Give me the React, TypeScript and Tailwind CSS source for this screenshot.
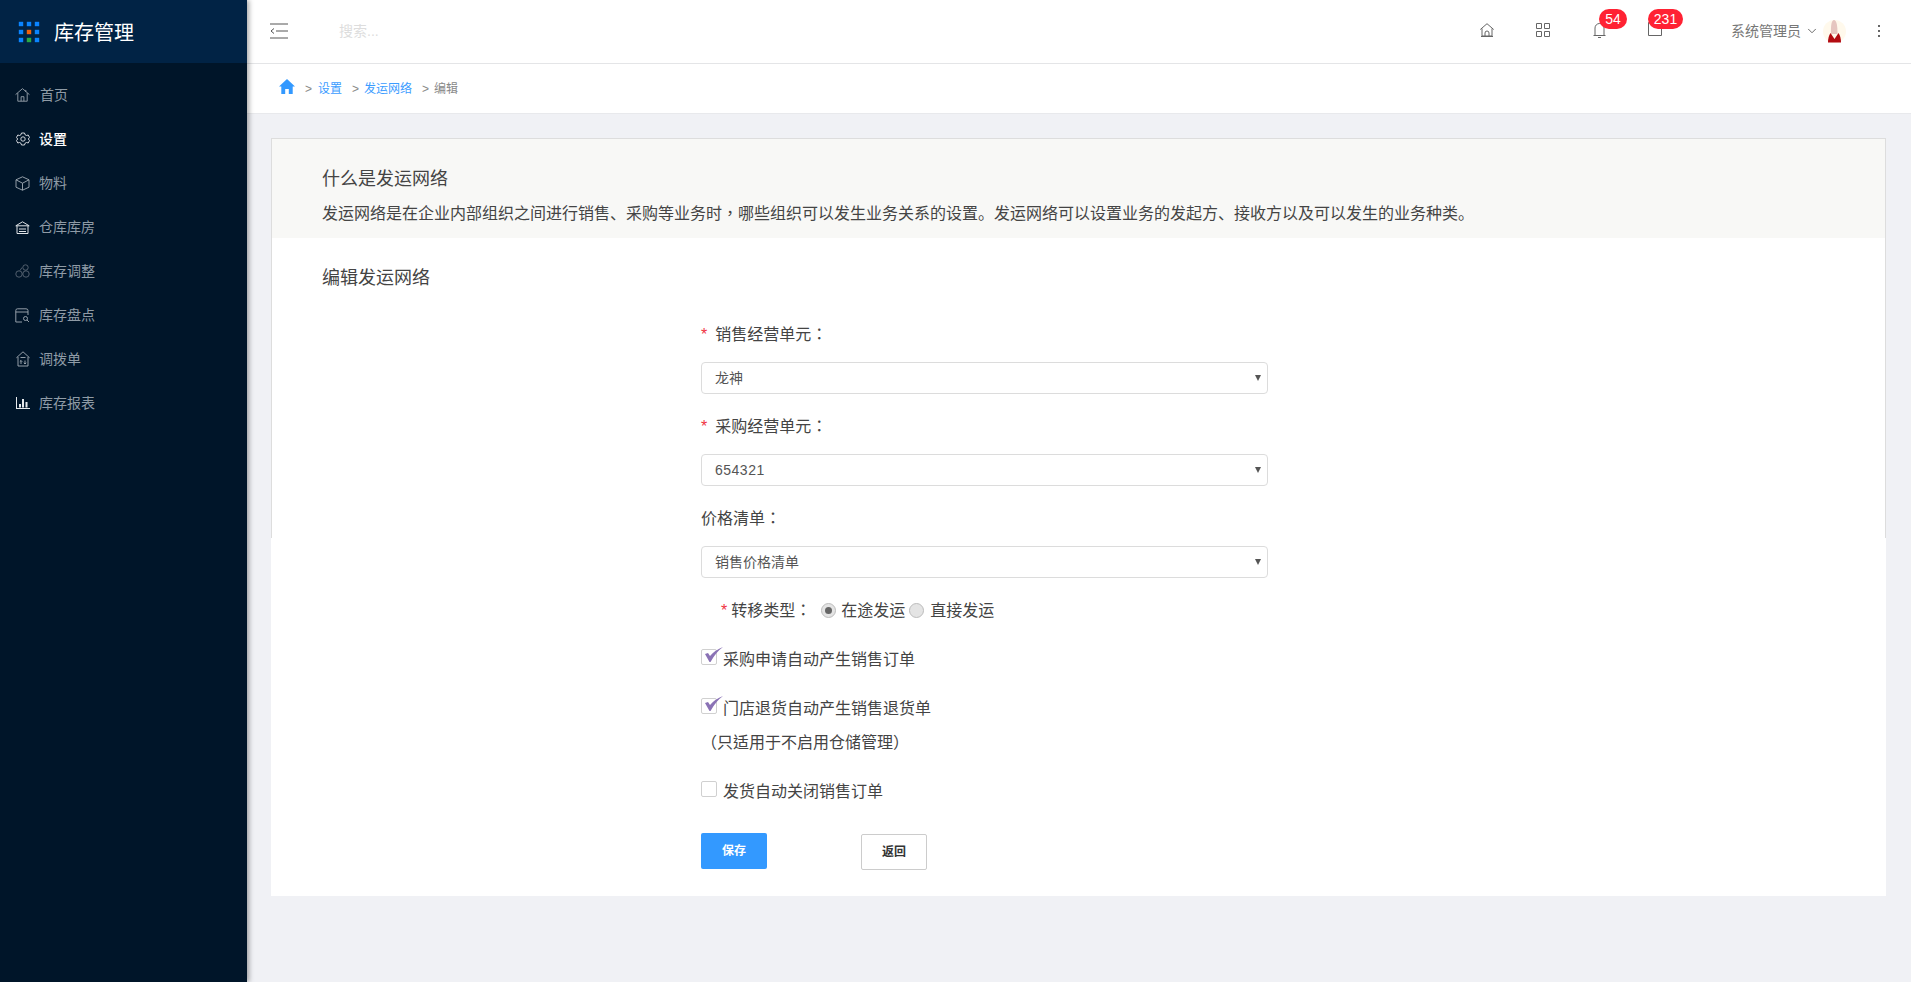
import React from "react";
import { ChevronDown } from "lucide-react";

const Gray = "#a3adb6";

const IconHouse = () => (
  <svg width="16" height="16" viewBox="0 0 16 16" fill="none" stroke={Gray} strokeWidth="0.9">
    <path d="M0.6 7.6 8 1.2l7.4 6.4M3 6v8.6h10V6M6.5 14.6V9.8h3v4.8M11.5 2.6v2" />
  </svg>
);
const IconGear = () => (
  <svg width="14" height="14" viewBox="0 0 14 14" fill="none" stroke="#e6e9ec" strokeWidth="0.9">
    <path d="M5.5 1h3l.5 1.7 1.5.8L12.2 3l1.3 2.4-1.2 1.6 1.2 1.6L12.2 11l-1.7-.5-1.5.8L8.5 13h-3L5 11.300l-1.500-.8L1.800 11 .5 8.600 1.700 7 .5 5.400 1.800 3l1.700.5 1.500-.8z" />
    <circle cx="7" cy="7" r="2.200" />
  </svg>
);
const IconCube = () => (
  <svg width="15" height="15" viewBox="0 0 15 15" fill="none" stroke={Gray} strokeWidth="0.9">
    <path d="M7.500 .8 14 3.800v7.400l-6.500 3-6.500-3V3.800zM1 3.800l6.500 3.400L14 3.800M7.500 7.200v7" />
  </svg>
);
const IconStore = () => (
  <svg width="15" height="13" viewBox="0 0 15 13" fill="none" stroke="#dfe3e7" strokeWidth="1">
    <path d="M.8 4.800 7.500.8l6.700 4z" />
    <path d="M2 5v7.500h11V5M4 8h7M4 10.500h7" />
  </svg>
);
const IconCircles = () => (
  <svg width="15" height="14" viewBox="0 0 15 14" fill="none" stroke="#5a6775" strokeWidth="0.9">
    <circle cx="10.500" cy="3.500" r="2.700" />
    <circle cx="4" cy="10" r="3.200" />
    <circle cx="11" cy="10" r="3.200" />
    <path d="M7 3.500 5 6.500" />
  </svg>
);
const IconCheckDoc = () => (
  <svg width="15" height="15" viewBox="0 0 15 15" fill="none" stroke={Gray} strokeWidth="0.9">
    <path d="M7 14H.8V2.500Q.8.800 2.500.800h8.500Q13 .8 13 2.500V7M.8 4h12.200" />
    <circle cx="10.500" cy="10.500" r="2" />
    <path d="m12 12 2 2" />
  </svg>
);
const IconTransfer = () => (
  <svg width="14" height="16" viewBox="0 0 14 16" fill="none" stroke={Gray} strokeWidth="0.9">
    <path d="M.4 6.800 7 .8l6.600 6M2 6v9h10V6M5 13V9.500M3.800 10.700 5 9.500l1.200 1.200M9 9.500V13M7.800 11.800 9 13l1.200-1.200M4.500 6.500h5" />
  </svg>
);
const IconBars = () => (
  <svg width="14" height="12" viewBox="0 0 14 12" fill="#e6e9ec">
    <path d="M0 0h1v11h13v1H0zM3 7h2v3.500H3zM6 2h2v8.500H6zM9.500 5h2v5.500h-2z" />
  </svg>
);

const menu = [
  { label: "首页", icon: <IconHouse />, gap: "gap-[10px]" },
  { label: "设置", icon: <IconGear />, active: true, gap: "gap-[9px]" },
  { label: "物料", icon: <IconCube />, gap: "gap-[9px]" },
  { label: "仓库库房", icon: <IconStore />, gap: "gap-[9px]" },
  { label: "库存调整", icon: <IconCircles />, gap: "gap-[9px]" },
  { label: "库存盘点", icon: <IconCheckDoc />, gap: "gap-[9px]" },
  { label: "调拨单", icon: <IconTransfer />, gap: "gap-[9px]" },
  { label: "库存报表", icon: <IconBars />, gap: "gap-[9px]" },
];

const logoCells = ["#0a84ff", "#0a84ff", "#0a84ff", "#0a84ff", "#f2600c", "#0a84ff", "#0a84ff", "#2aa845", "#0a84ff"];

const Sidebar = () => (
  <aside className="relative z-10 w-[247px] shrink-0 bg-[#001529] shadow-[2px_0_5px_rgba(0,0,0,0.35)]">
    <div className="flex h-[63px] items-center bg-[#012345] pl-[19px]">
      <div className="grid w-[20px] grid-cols-3 gap-[4px]">
        {logoCells.map((c, i) => (
          <span key={i} className="h-[4px] w-[4px] scale-110" style={{ background: c }} />
        ))}
      </div>
      <span className="ml-[15px] mt-[2px] text-[20px] leading-none text-white">库存管理</span>
    </div>
    <nav className="pt-[10px]">
      {menu.map((m) => (
        <div
          key={m.label}
          className={`flex h-[44px] items-center pl-[15px] text-[14px] ${m.gap} ${m.active ? "font-medium text-white" : "text-[#8f9ba6]"}`}
        >
          <span className="flex w-[15px] justify-center">{m.icon}</span>
          <span>{m.label}</span>
        </div>
      ))}
    </nav>
  </aside>
);

const Badge = ({ children, className }: { children: React.ReactNode; className: string }) => (
  <span className={`absolute top-[9px] flex h-[20px] items-center justify-center rounded-full bg-[#ff2233] text-[14px] text-white ${className}`}>
    {children}
  </span>
);

const TopBar = () => (
  <header className="relative flex h-[64px] shrink-0 items-center border-b border-[#e4e5e7] bg-white pb-px">
    <svg className="ml-[23px]" width="18" height="16" viewBox="0 0 18 16" fill="none" stroke="#555" strokeWidth="1">
      <path d="M0 1h18M6 8h12M0 15h18M4 5.500 1 8l3 2.500" />
    </svg>
    <span className="ml-[51px] text-[14px] text-[#dddddd]">搜索...</span>
    {/* right-hand tools */}
    <svg className="absolute left-[1233px] top-[23px]" width="14" height="14" viewBox="0 0 14 14" fill="none" stroke="#666" strokeWidth="1">
      <path d="M.3 6.500 7 .7l6.700 5.800M2 5.500V13h10V5.500M5 13V10a2 2 0 0 1 4 0v3M1 13.500h12" />
    </svg>
    <svg className="absolute left-[1289px] top-[23px]" width="14" height="14" viewBox="0 0 14 14" fill="none" stroke="#666" strokeWidth="1">
      <path d="M.5.500h5v5h-5zM8.500.500h5v5h-5zM.5 8.500h5v5h-5zM8.500 8.500h5v5h-5z" />
    </svg>
    <svg className="absolute left-[1346px] top-[22px]" width="13" height="17" viewBox="0 0 13 17" fill="none" stroke="#666" strokeWidth="1">
      <path d="M.5 13.500h12M2 13.500V6a4.500 4.500 0 0 1 9 0v7.500M5 15.500h3" />
    </svg>
    <Badge className="left-[1352px] w-[28px]">54</Badge>
    <svg className="absolute left-[1401px] top-[22px]" width="14" height="14" viewBox="0 0 14 14" fill="none" stroke="#666" strokeWidth="1">
      <path d="M.5.500h13v13H.5z" />
    </svg>
    <Badge className="left-[1401px] w-[35px]">231</Badge>
    <div className="absolute left-[1484px] top-[19px] flex items-center">
      <span className="text-[14px] leading-[24px] text-[#777777]">系统管理员</span>
      <ChevronDown className="ml-[4px] text-[#555]" size={14} strokeWidth={1.500} />
      <svg className="ml-[4px]" width="23" height="23" viewBox="0 0 23 23">
        <circle cx="11.500" cy="11.500" r="11.500" fill="#fff9ec" />
        <path d="M8 14Q7.500 0 11 0t3.500 14z" fill="#e6c6c0" />
        <path d="M5 22.500q0-6 2.500-9.500l4 6 4-6q2.500 3.500 2.500 9.500z" fill="#b30c12" />
      </svg>
      <span className="ml-[32px] flex flex-col gap-[3px]">
        <i className="h-[2px] w-[2px] bg-[#666]" />
        <i className="h-[2px] w-[2px] bg-[#666]" />
        <i className="h-[2px] w-[2px] bg-[#666]" />
      </span>
    </div>
  </header>
);

const Crumb = () => (
  <div className="flex h-[50px] shrink-0 items-center border-b border-[#e8e9ec] bg-white pl-[32px] text-[12px]">
    <svg className="mb-[4px]" width="16" height="15" viewBox="0 0 16 15" fill="#3399ff">
      <path d="M8 0 16 7.500h-2.300V15H9.800v-5H6.200v5H2.300V7.500H0z" />
    </svg>
    <span className="ml-[10px] text-[#888]">&gt;</span>
    <span className="ml-[6px] text-[#3b9cff]">设置</span>
    <span className="ml-[10px] text-[#888]">&gt;</span>
    <span className="ml-[5px] text-[#3b9cff]">发运网络</span>
    <span className="ml-[10px] text-[#888]">&gt;</span>
    <span className="ml-[5px] text-[#888888]">编辑</span>
  </div>
);

const Required = () => <span className="text-[#f0353f]">*</span>;

// the page's wide punctuation sits mid-cell, which the TC face gives
const Wide = ({ children }: { children: string }) => (
  <span className="font-['Noto_Sans_CJK_TC',sans-serif] leading-none">{children}</span>
);

const Picker = ({ value, className }: { value: string; className?: string }) => (
  <div className="relative mt-[15px] h-[32px] w-[567px]">
    <select
      defaultValue={value}
      className={`h-full w-full appearance-none rounded-[4px] border border-[#dcdcdc] bg-white pl-[13px] text-[14px] text-[#555555] outline-none ${className ?? ""}`}
    >
      <option>{value}</option>
    </select>
    <span className="pointer-events-none absolute right-[7px] top-[13px] h-0 w-0 border-x-[3px] border-t-[6px] border-x-transparent border-t-[#555]" />
  </div>
);

const Check = ({ on }: { on?: boolean }) => (
  <span className="relative -mt-[6px] h-[16px] w-[16px] shrink-0 rounded-[2px] border border-[#d0d0d0] bg-white">
    {on && (
      <svg className="absolute left-[3px] top-[-3px]" width="18" height="15" viewBox="0 0 18 15" fill="#8a72b5">
        <path d="M0 7l3-1 2 3Q10 3 18 0 11 5 5.500 15h-1z" />
      </svg>
    )}
  </span>
);

const Radio = ({ on }: { on?: boolean }) => (
  <span className="-mt-[2px] flex h-[15px] w-[15px] shrink-0 items-center justify-center rounded-full border border-[#bcbcbc] bg-[#e4e4e4]">
    {on && <span className="h-[7px] w-[7px] rounded-full bg-[#666]" />}
  </span>
);

const Form = () => (
  <div className="pl-[430px] text-[16px] text-[#444444]">
    <div className="mt-[30px] flex h-[24px] items-center leading-[24px]">
      <Required />
      <span className="ml-[8px]">销售经营单元<Wide>：</Wide></span>
    </div>
    <Picker value="龙神" />
    <div className="mt-[21px] flex h-[24px] items-center leading-[24px]">
      <Required />
      <span className="ml-[8px]">采购经营单元<Wide>：</Wide></span>
    </div>
    <Picker value="654321" className="tracking-[0.5px]" />
    <div className="mt-[21px] flex h-[24px] items-center leading-[24px]">
      <span>价格清单<Wide>：</Wide></span>
    </div>
    <Picker value="销售价格清单" />
    <div className="mt-[21px] flex h-[24px] items-center pl-[20px] leading-[24px]">
      <Required />
      <span className="ml-[4px] w-[90px]">转移类型<Wide>：</Wide></span>
      <Radio on />
      <span className="ml-[5px]">在途发运</span>
      <span className="ml-[4px]">
        <Radio />
      </span>
      <span className="ml-[6px]">直接发运</span>
    </div>
    <label className="mt-[25px] flex h-[24px] items-center gap-[6px] leading-[24px]">
      <Check on />
      采购申请自动产生销售订单
    </label>
    <label className="mt-[25px] flex h-[24px] items-center gap-[6px] leading-[24px]">
      <Check on />
      门店退货自动产生销售退货单
    </label>
    <p className="mt-[10px] h-[24px] leading-[24px]"><Wide>（只适用于不启用仓储管理）</Wide></p>
    <label className="mt-[25px] flex h-[24px] items-center gap-[6px] leading-[24px]">
      <Check />
      发货自动关闭销售订单
    </label>
    <div className="mt-[29px] flex items-start">
      <button className="h-[36px] w-[66px] rounded-[2px] bg-[#3399ff] text-[12px] font-bold text-white">保存</button>
      <button className="ml-[94px] mt-px h-[36px] w-[66px] rounded-[2px] border border-[#cccccc] bg-white text-[12px] font-bold text-[#333]">返回</button>
    </div>
  </div>
);

export default function App() {
  return (
    <div className="flex h-[982px] overflow-hidden bg-[#f0f1f5] font-['Liberation_Sans','Noto_Sans_CJK_SC',sans-serif]">
      <Sidebar />
      <main className="flex min-w-0 flex-1 flex-col">
        <TopBar />
        <Crumb />
        <div className="pl-[24px] pr-[25px] pt-[24px]">
          <section className="relative bg-white pb-[26px]">
            {/* the box border stops partway down the card in the page */}
            <div className="pointer-events-none absolute inset-x-0 top-0 h-[400px] border-x border-t border-[#dddddd]" />
            <div className="h-[100px] bg-[#f8f8f6] pl-[51px] pt-[26px]">
              <h2 className="text-[18px] leading-[30px] text-[#444444]">什么是发运网络</h2>
              <p className="mt-[8px] text-[16px] leading-[24px] text-[#444444]">
                发运网络是在企业内部组织之间进行销售、采购等业务时<Wide>，</Wide>哪些组织可以发生业务关系的设置。发运网络可以设置业务的发起方、接收方以及可以发生的业务种类。
              </p>
            </div>
            <h2 className="mt-[25px] pl-[51px] text-[18px] leading-[30px] text-[#444444]">编辑发运网络</h2>
            <Form />
          </section>
        </div>
      </main>
    </div>
  );
}
